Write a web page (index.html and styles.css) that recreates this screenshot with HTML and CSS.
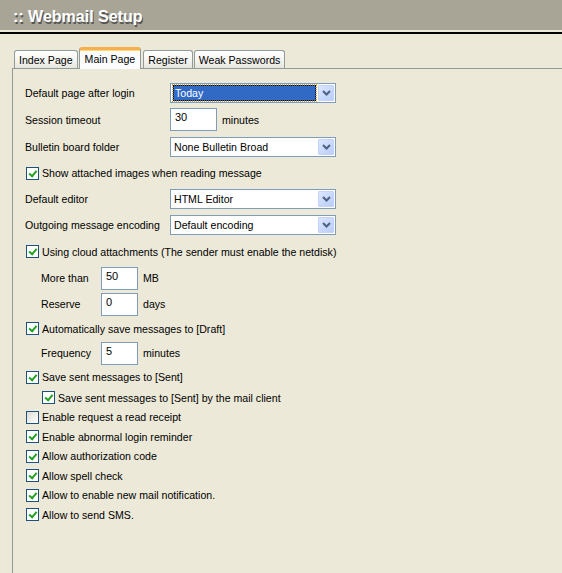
FILE: index.html
```html
<!DOCTYPE html>
<html>
<head>
<meta charset="utf-8">
<link rel="stylesheet" href="styles.css">
</head>
<body>
<div class="header"><h1>:: Webmail Setup</h1></div>
<div class="rule"></div>
<div class="tabs">
  <div class="tab">Index Page</div>
  <div class="tab active">Main Page</div>
  <div class="tab">Register</div>
  <div class="tab">Weak Passwords</div>
</div>
<div class="panel">
  <div class="row h26">
    <div class="label">Default page after login</div>
    <div class="select focus"><div class="value"><span>Today</span></div><div class="arrow"><svg width="9" height="6" viewBox="0 0 9 6"><path d="M1 1 L4.5 4.5 L8 1" fill="none" stroke="#4d6185" stroke-width="2"/></svg></div></div>
  </div>
  <div class="row h27">
    <div class="label">Session timeout</div>
    <div class="input">30</div><span class="unit">minutes</span>
  </div>
  <div class="row h27">
    <div class="label">Bulletin board folder</div>
    <div class="select"><div class="value">None Bulletin Broad</div><div class="arrow"><svg width="9" height="6" viewBox="0 0 9 6"><path d="M1 1 L4.5 4.5 L8 1" fill="none" stroke="#4d6185" stroke-width="2"/></svg></div></div>
  </div>
  <div class="row h26">
    <span class="cb on"></span><span>Show attached images when reading message</span>
  </div>
  <div class="row h26">
    <div class="label">Default editor</div>
    <div class="select"><div class="value">HTML Editor</div><div class="arrow"><svg width="9" height="6" viewBox="0 0 9 6"><path d="M1 1 L4.5 4.5 L8 1" fill="none" stroke="#4d6185" stroke-width="2"/></svg></div></div>
  </div>
  <div class="row h26">
    <div class="label">Outgoing message encoding</div>
    <div class="select"><div class="value">Default encoding</div><div class="arrow"><svg width="9" height="6" viewBox="0 0 9 6"><path d="M1 1 L4.5 4.5 L8 1" fill="none" stroke="#4d6185" stroke-width="2"/></svg></div></div>
  </div>
  <div class="row h27">
    <span class="cb on"></span><span>Using cloud attachments (The sender must enable the netdisk)</span>
  </div>
  <div class="row h26 sub">
    <div class="sublabel">More than</div>
    <div class="input small">50</div><span class="unit">MB</span>
  </div>
  <div class="row h26 sub">
    <div class="sublabel">Reserve</div>
    <div class="input small">0</div><span class="unit">days</span>
  </div>
  <div class="row h23">
    <span class="cb on"></span><span>Automatically save messages to [Draft]</span>
  </div>
  <div class="row h26 sub">
    <div class="sublabel">Frequency</div>
    <div class="input small">5</div><span class="unit">minutes</span>
  </div>
  <div class="row h22">
    <span class="cb on"></span><span>Save sent messages to [Sent]</span>
  </div>
  <div class="row hc sub">
    <span class="cb on"></span><span>Save sent messages to [Sent] by the mail client</span>
  </div>
  <div class="row hc">
    <span class="cb"></span><span>Enable request a read receipt</span>
  </div>
  <div class="row hc">
    <span class="cb on"></span><span>Enable abnormal login reminder</span>
  </div>
  <div class="row hc">
    <span class="cb on"></span><span>Allow authorization code</span>
  </div>
  <div class="row hc">
    <span class="cb on"></span><span>Allow spell check</span>
  </div>
  <div class="row hc">
    <span class="cb on"></span><span>Allow to enable new mail notification.</span>
  </div>
  <div class="row hc">
    <span class="cb on"></span><span>Allow to send SMS.</span>
  </div>
</div>
</body>
</html>
```
FILE: styles.css
```css
html, body {
  margin: 0;
  padding: 0;
  background: #ece9d8;
  font-family: "Liberation Sans", Arial, sans-serif;
  font-size: 10.6px;
  color: #000;
  overflow: hidden;
}
.header {
  height: 30px;
  background: #a8a597;
  display: flex;
  align-items: center;
}
.header h1 {
  margin: 3px 0 0 13px;
  font-size: 16px;
  font-weight: bold;
  color: #fff;
  text-shadow: 1px 2px 0 #555;
}
.rule {
  margin-top: 2px;
  height: 2px;
  background: #000;
}
.tabs {
  display: flex;
  align-items: flex-end;
  margin: 13px 0 0 14px;
  height: 21px;
  gap: 1px;
  position: relative;
  z-index: 1;
}
.tab {
  height: 17px;
  line-height: 18px;
  padding: 0 4px;
  border: 1px solid #919b9c;
  border-bottom: none;
  border-radius: 3px 3px 0 0;
  background: linear-gradient(#fff, #f3f3ef 60%, #e6e5dc);
  white-space: nowrap;
}
.tab.active {
  height: 19px;
  line-height: 18px;
  margin-bottom: -1px;
  margin-right: 1px;
  padding: 0 5px;
  background: #fcfcfe;
  border-top: 3px solid #f5b04a;
  box-shadow: inset 0 1px 0 #ffd774;
}
.panel {
  margin-left: 12px;
  border-left: 1px solid #919b9c;
  border-top: 1px solid #919b9c;
  padding: 11px 0 60px 12px;
  display: flex;
  flex-direction: column;
}
.row {
  display: flex;
  align-items: center;
  white-space: nowrap;
}
.h22 { height: 22px; }
.h23 { height: 23px; }
.h26 { height: 26px; }
.h27 { height: 27px; }
.hc { height: 19.5px; }
.sub { padding-left: 16px; }
.label { width: 145px; flex: none; }
.sublabel { width: 60px; flex: none; }
.select {
  width: 164px;
  height: 18px;
  border: 1px solid #7f9db9;
  background: #fff;
  display: flex;
  align-items: stretch;
}
.select .value {
  flex: 1;
  padding-left: 3px;
  display: flex;
  align-items: center;
}
.select.focus .value {
  padding: 0;
  margin: 1px 0 1px 2px;
}
.select.focus .value span {
  flex: 1;
  height: 100%;
  box-sizing: border-box;
  display: flex;
  align-items: center;
  padding-left: 1px;
  background: #316ac5;
  color: #fff;
  outline: 1px dotted #e0a020;
  border: 1px dotted #000;
}
.arrow {
  width: 16px;
  margin: 1px 1px 1px 2px;
  border: 1px solid #c3d3fd;
  border-radius: 1px;
  box-sizing: border-box;
  background: linear-gradient(135deg, #dce7ff, #b9cdf8);
  display: flex;
  align-items: center;
  justify-content: center;
}
.input {
  width: 41px;
  height: 19px;
  border: 1px solid #7f9db9;
  background: #fff;
  padding: 2px 0 0 4px;
  line-height: 13px;
  font-size: 11px;
}
.input.small {
  width: 31px;
}
.unit { margin-left: 5px; }
.cb {
  width: 11px;
  height: 11px;
  border: 1px solid #1c5180;
  margin: 0 3px 0 1px;
  flex: none;
  background: linear-gradient(135deg, #dcdcd7, #fff);
  position: relative;
}
.cb.on {
  background: #fff;
}
.cb.on::after {
  content: "";
  position: absolute;
  left: 2px;
  top: 1px;
  width: 3px;
  height: 6px;
  border: solid #21a121;
  border-width: 0 2px 2px 0;
  transform: rotate(40deg) translate(1px, -1px);
}
```
